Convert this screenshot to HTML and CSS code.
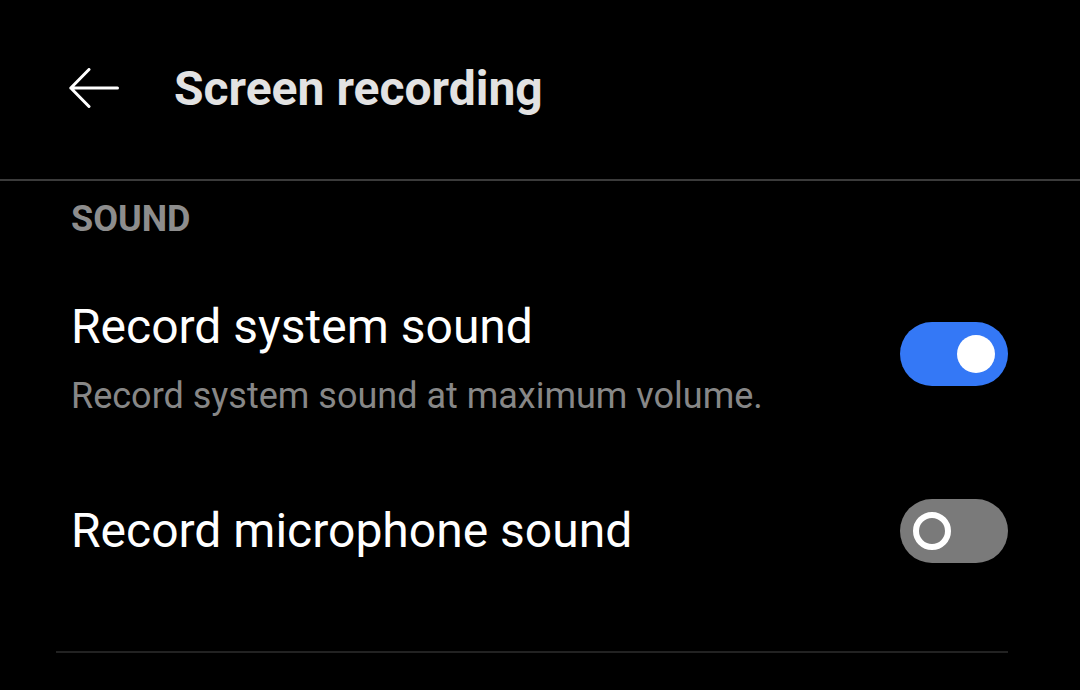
FILE: index.html
```html
<!DOCTYPE html>
<html>
  <head>
    <title>Screen recording</title>
    <link rel="stylesheet" href="styles.css">
  </head>
  <body>
    <div class="header">
      <svg class="back" width="50" height="40" viewBox="0 0 50 40">
        <path d="M48.5 20 H1.8 M20 1.5 L1.8 20 L20 38.5" fill="none" stroke="#ffffff" stroke-width="3" stroke-linecap="round" stroke-linejoin="round"/>
      </svg>
      <h1>Screen recording</h1>
    </div>

    <div class="content">
      <div class="section-title">SOUND</div>

      <div class="row first">
        <div class="texts">
          <div class="label">Record system sound</div>
          <div class="summary">Record system sound at maximum volume.</div>
        </div>
        <div class="switch on"><span class="knob"></span></div>
      </div>

      <div class="row second">
        <div class="texts">
          <div class="label">Record microphone sound</div>
        </div>
        <div class="switch off"><span class="knob"></span></div>
      </div>

      <div class="divider"></div>
    </div>
  </body>
</html>
```

FILE: styles.css
```css
/* Reset */
body, h1, div {
  margin: 0;
  padding: 0;
  box-sizing: border-box;
}

body {
  background-color: #000000;
  font-family: Roboto, "Noto Sans", sans-serif;
  color: #ffffff;
  width: 1080px;
  height: 690px;
  overflow: hidden;
}

/* Header */
.header {
  height: 181px;
  display: flex;
  align-items: center;
  padding-left: 69px;
  border-bottom: 2px solid #3b3b3b;
}

.back {
  display: block;
  margin-bottom: 4px;
}

h1 {
  margin-left: 55px;
  margin-bottom: 2px;
  font-size: 48px;
  line-height: 56px;
  font-weight: 700;
  color: #e2e2e2;
}

/* Content */
.content {
  padding: 0 72px 0 71px;
}

.section-title {
  margin-top: 17px;
  font-size: 36px;
  font-weight: 700;
  color: #8d8d8d;
  line-height: 42px;
}

.row {
  display: flex;
  align-items: center;
  justify-content: space-between;
}

.row.first {
  margin-top: 59px;
}

.row.first .switch {
  margin-bottom: 8px;
}

.row.second {
  margin-top: 82px;
}

.label {
  font-size: 48px;
  line-height: 56px;
  color: #ffffff;
}

.summary {
  margin-top: 20px;
  font-size: 36px;
  line-height: 42px;
  color: #878787;
}

/* Switches */
.switch {
  position: relative;
  width: 108px;
  height: 64px;
  border-radius: 32px;
}

.switch.on {
  background-color: #3478f6;
}

.switch.off {
  background-color: #7a7a7a;
}

.knob {
  position: absolute;
  top: 13px;
  width: 38px;
  height: 38px;
  border-radius: 50%;
  box-sizing: border-box;
}

.switch.on .knob {
  left: 57px;
  background-color: #ffffff;
}

.switch.off .knob {
  left: 13px;
  border: 6px solid #ffffff;
}

.divider {
  margin: 88px 0 0 -15px;
  height: 2px;
  background-color: #222222;
}
```
